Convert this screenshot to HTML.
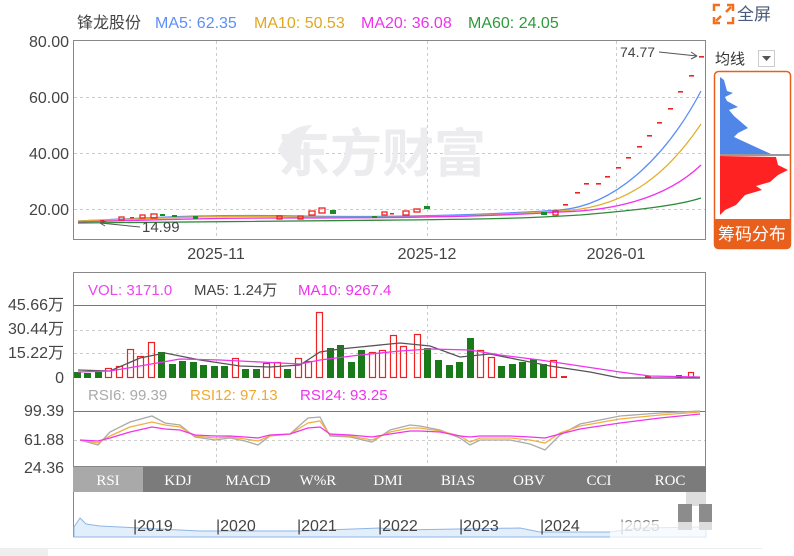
<!DOCTYPE html>
<html><head><meta charset="utf-8"><style>
body{margin:0;width:794px;height:556px;background:#fff;overflow:hidden;font-family:"Liberation Sans","Noto Sans CJK SC",sans-serif;}
svg{position:absolute;left:0;top:0}
</style></head><body>
<svg width="794" height="556" viewBox="0 0 794 556" font-family="Liberation Sans, Noto Sans CJK SC, sans-serif">
<text x="77" y="28" font-size="16" fill="#444">锋龙股份</text>
<text x="155" y="28" font-size="16" fill="#5b8ff9">MA5: 62.35</text>
<text x="254" y="28" font-size="16" fill="#e0a820">MA10: 50.53</text>
<text x="361" y="28" font-size="16" fill="#ee33ee">MA20: 36.08</text>
<text x="468" y="28" font-size="16" fill="#2e9a3a">MA60: 24.05</text>
<g stroke="#f07020" stroke-width="2.5" fill="none">
<path d="M714 11V5h6M727 5h6v6M714 17v6h6M733 17v6h-6"/>
<path d="M716 21l5-5M731 7l-5 5"/>
</g>
<text x="737" y="20" font-size="17" fill="#4a5a7a">全屏</text>
<g font-size="16" fill="#444" text-anchor="end">
<text x="69" y="47">80.00</text><text x="69" y="103">60.00</text><text x="69" y="159">40.00</text><text x="69" y="215">20.00</text>
</g>
<rect x="73.5" y="40.5" width="632" height="199" fill="#fff" stroke="#888"/>
<g stroke="#ccc" stroke-dasharray="3,3">
<path d="M74 97.5H705M74 153.5H705M74 209.5H705"/>
<path d="M216.5 41V239M427.5 41V239M616.5 41V239"/>
</g>
<text x="278" y="172" font-size="52" fill="#ececee" font-weight="bold">东方财富</text>
<path d="M278 150q10-25 35-25q-15 10-12 45q-15-5-23-20z" fill="#ececee"/>
<g fill="none" stroke-width="1.3">
<path d="M78 221C150 218 200 214 300 216S500 214 560 210C620 205 670 150 701 91" stroke="#5b8ff9"/>
<path d="M78 221C150 219 200 215 300 217S500 215 560 211C630 208 670 170 701 124" stroke="#e0b030"/>
<path d="M78 222C150 220 200 218 300 218S500 216 560 212C640 210 680 185 701 165" stroke="#ee33ee"/>
<path d="M78 223C200 222 300 221 400 220S530 218 580 215C640 210 680 205 701 198" stroke="#2e8a3a"/>
</g>
<g fill="none" stroke="#e22" stroke-width="1.3">
<rect x="119" y="217" width="5" height="3"/><rect x="140" y="215" width="5" height="3"/><rect x="151" y="214" width="6" height="4"/>
<rect x="277" y="216" width="5" height="3"/><rect x="298" y="216" width="5" height="3"/>
<rect x="309" y="211" width="6" height="4"/><rect x="319" y="208" width="6" height="5"/>
<rect x="382" y="212" width="5" height="3"/><rect x="403" y="211" width="6" height="4"/><rect x="414" y="209" width="6" height="3"/>
<rect x="553" y="211" width="5" height="4"/>
</g>
<g fill="#1a8a2a">
<rect x="160" y="214" width="5" height="2"/><rect x="172" y="215" width="5" height="2"/><rect x="193" y="216" width="5" height="3"/>
<rect x="330" y="210" width="6" height="4"/><rect x="372" y="216" width="5" height="2"/><rect x="424" y="206" width="6" height="3"/>
<rect x="541" y="212" width="6" height="3"/>
</g>
<g fill="#e22">
<rect x="563" y="204" width="5" height="1.6"/><rect x="575" y="192" width="5" height="1.6"/><rect x="584" y="183" width="5" height="1.6"/>
<rect x="596" y="183" width="5" height="1.6"/><rect x="605" y="176" width="5" height="1.6"/><rect x="616" y="167" width="5" height="1.6"/>
<rect x="626" y="157" width="5" height="1.6"/><rect x="637" y="146" width="5" height="1.6"/><rect x="647" y="135" width="5" height="1.6"/>
<rect x="657" y="122" width="5" height="1.6"/><rect x="668" y="108" width="5" height="1.6"/><rect x="678" y="91" width="5" height="1.6"/>
<rect x="689" y="75" width="5" height="1.6"/><rect x="699" y="56" width="5" height="1.6"/>
<rect x="100" y="220" width="4" height="1.5"/><rect x="130" y="217" width="4" height="1.5"/><rect x="390" y="213" width="4" height="1.5"/>
</g>
<text x="620" y="57" font-size="14" fill="#444">74.77</text>
<path d="M659 52L697 56" stroke="#555"/><path d="M697 56l-6-4M697 56l-6 3" stroke="#555"/>
<path d="M100 223L140 227" stroke="#555"/><path d="M100 223l6-2M100 223l5 3" stroke="#555"/>
<text x="142" y="232" font-size="15" fill="#444">14.99</text>
<g font-size="16" fill="#444" text-anchor="middle">
<text x="216" y="259">2025-11</text><text x="427" y="259">2025-12</text><text x="616" y="259">2026-01</text>
</g>
<text x="715" y="64" font-size="15" fill="#333">均线</text>
<rect x="758.5" y="50.5" width="16" height="16" fill="#fff" stroke="#ccc"/>
<path d="M762 56h9l-4.5 5z" fill="#555"/>
<rect x="714.5" y="71.5" width="76" height="177" rx="4" fill="#fff" stroke="#e8601c" stroke-width="1.5"/>
<path d="M720 77L724 80L727 91L733 93L725 97L727 101L738 107L729 110L734 116L748 128L738 133L734 137L771 154L720 154Z" fill="#4f86e8"/>
<rect x="720" y="154" width="70" height="2" fill="#999"/>
<path d="M720 156L776 157L778 165L788 170L778 175L770 182L756 186L762 190L745 195L736 205L725 210L720 215Z" fill="#f22"/>
<path d="M714 219h77v25a4 4 0 0 1-4 4h-69a4 4 0 0 1-4-4z" fill="#e8601c"/>
<text x="752" y="240" font-size="17" fill="#fff" text-anchor="middle">筹码分布</text>
<rect x="73.5" y="272.5" width="632" height="194" fill="#fff" stroke="#888"/>
<path d="M74 305.5H705M74 411.5H705" stroke="#777"/>
<text x="88" y="295" font-size="15" fill="#ee44ee">VOL: 3171.0</text>
<text x="194" y="295" font-size="15" fill="#444">MA5: 1.24万</text>
<text x="298" y="295" font-size="15" fill="#ee33ee">MA10: 9267.4</text>
<g font-size="16" fill="#444" text-anchor="end">
<text x="64" y="310">45.66万</text><text x="64" y="334">30.44万</text><text x="64" y="358">15.22万</text><text x="64" y="383">0</text>
<text x="64" y="416">99.39</text><text x="64" y="445">61.88</text><text x="64" y="473">24.36</text>
</g>
<g stroke="#ccc" stroke-dasharray="3,3">
<path d="M74 330.5H705M74 353.5H705M74 440.5H705"/>
<path d="M216.5 306V378M427.5 306V378M616.5 306V378M216.5 412V466M427.5 412V466M616.5 412V466"/>
</g>
<g fill="#1a7a1a">
<rect x="74" y="372" width="7" height="6"/><rect x="84" y="373" width="7" height="5"/><rect x="95" y="372" width="7" height="6"/>
<rect x="158" y="352" width="7" height="26"/><rect x="169" y="364" width="7" height="14"/><rect x="179" y="361" width="7" height="17"/>
<rect x="190" y="362" width="7" height="16"/><rect x="200" y="365" width="7" height="13"/><rect x="211" y="366" width="7" height="12"/>
<rect x="221" y="366" width="7" height="12"/><rect x="242" y="369" width="7" height="9"/><rect x="253" y="369" width="7" height="9"/>
<rect x="284" y="369" width="7" height="9"/><rect x="327" y="348" width="7" height="30"/><rect x="337" y="345" width="7" height="33"/>
<rect x="348" y="362" width="7" height="16"/><rect x="358" y="350" width="7" height="28"/>
<rect x="424" y="348" width="7" height="30"/><rect x="435" y="360" width="7" height="18"/><rect x="446" y="365" width="7" height="13"/>
<rect x="456" y="362" width="7" height="16"/><rect x="467" y="338" width="7" height="40"/><rect x="498" y="366" width="7" height="12"/>
<rect x="509" y="364" width="7" height="14"/><rect x="519" y="362" width="7" height="16"/><rect x="530" y="359" width="7" height="19"/>
<rect x="540" y="364" width="7" height="14"/>
</g>
<g fill="none" stroke="#e22" stroke-width="1.2">
<rect x="105.5" y="368.5" width="6" height="9"/><rect x="116.5" y="366.5" width="6" height="11"/><rect x="127.5" y="349.5" width="6" height="28"/>
<rect x="137.5" y="356.5" width="6" height="21"/><rect x="148.5" y="342.5" width="6" height="35"/><rect x="232.5" y="358.5" width="6" height="19"/>
<rect x="263.5" y="363.5" width="6" height="14"/><rect x="274.5" y="362.5" width="6" height="15"/><rect x="295.5" y="358.5" width="6" height="19"/>
<rect x="305.5" y="361.5" width="6" height="16"/><rect x="316.5" y="312.5" width="6" height="65"/><rect x="369.5" y="352.5" width="6" height="25"/>
<rect x="379.5" y="350.5" width="6" height="27"/><rect x="390.5" y="335.5" width="6" height="42"/><rect x="400.5" y="346.5" width="6" height="31"/>
<rect x="414.5" y="334.5" width="6" height="43"/><rect x="477.5" y="350.5" width="6" height="27"/><rect x="488.5" y="357.5" width="6" height="20"/>
<rect x="550.5" y="360.5" width="6" height="17"/><rect x="688.5" y="372.5" width="5" height="5"/>
</g>
<g fill="#e22"><rect x="561" y="376" width="6" height="2"/><rect x="645" y="376" width="6" height="2"/><rect x="676" y="375" width="6" height="3"/></g>
<g fill="none" stroke-width="1.3">
<polyline stroke="#555" points="78,370 110,371 140,358 165,353 200,360 240,366 270,367 300,365 320,352 340,349 360,347 400,343 430,346 460,357 490,354 520,360 550,366 590,372 620,378 700,378"/>
<polyline stroke="#ee33ee" points="78,372 110,371 140,366 180,359 220,360 260,362 300,364 320,360 360,355 400,351 430,349 470,350 500,355 540,360 580,366 620,372 650,376 700,377"/>
</g>
<text x="88" y="400" font-size="15" fill="#aaa">RSI6: 99.39</text>
<text x="190" y="400" font-size="15" fill="#f0a830">RSI12: 97.13</text>
<text x="300" y="400" font-size="15" fill="#ee33ee">RSI24: 93.25</text>
<g fill="none" stroke-width="1.3">
<polyline stroke="#aaa" points="80,440 98,445 110,432 130,422 152,416 165,423 180,425 195,437 215,440 230,438 245,441 258,445 270,436 290,434 308,418 320,417 330,436 350,437 372,442 390,430 410,425 420,426 440,430 460,438 470,445 480,440 510,440 530,444 545,450 560,435 580,424 620,416 660,413 700,411"/>
<polyline stroke="#f0b040" points="80,440 98,443 110,436 130,427 152,422 165,425 180,427 195,436 215,438 230,437 245,439 258,441 270,436 290,434 308,423 320,421 330,435 350,436 372,440 390,432 410,428 420,428 440,431 460,436 470,442 480,438 510,438 530,440 545,443 560,433 580,426 620,419 660,415 700,412"/>
<polyline stroke="#ee33ee" points="80,440 98,441 110,438 130,432 152,427 165,429 180,430 195,435 215,436 230,436 245,437 258,438 270,435 290,434 308,428 320,427 330,434 350,435 372,437 390,434 410,431 420,431 440,432 460,436 470,437 480,436 510,436 530,437 545,438 560,434 580,429 620,423 660,418 700,414"/>
</g>
<rect x="73" y="467" width="633" height="25" fill="#7b7b7b"/>
<rect x="73" y="467" width="70" height="25" fill="#a9a9a9"/>
<g font-family="Liberation Serif, serif" font-size="15" fill="#fff" text-anchor="middle">
<text x="108" y="485">RSI</text><text x="178" y="485">KDJ</text><text x="248" y="485">MACD</text><text x="318" y="485">W%R</text>
<text x="388" y="485">DMI</text><text x="458" y="485">BIAS</text><text x="529" y="485">OBV</text><text x="599" y="485">CCI</text><text x="670" y="485">ROC</text>
</g>
<path d="M73.5 492V537" stroke="#888"/>
<path d="M74 537V527L80 518L86 524L100 526L120 527L200 531L300 531L380 528L400 530L520 528L540 532L610 532L640 528L706 527V537Z" fill="#e3eefb" stroke="#8fb4e8"/>
<g font-size="16" fill="#444">
<text x="133" y="531">|2019</text><text x="216" y="531">|2020</text><text x="297" y="531">|2021</text><text x="378" y="531">|2022</text>
<text x="459" y="531">|2023</text><text x="540" y="531">|2024</text><text x="620" y="531" fill="#888">|2025</text>
</g>
<rect x="686" y="492" width="20" height="14" fill="#ddd"/>
<rect x="678" y="504" width="14" height="26" fill="#8c8c8c"/><rect x="699" y="504" width="13" height="26" fill="#8c8c8c"/>
<rect x="610" y="522" width="160" height="16" fill="#fff" opacity="0.7"/>
<rect x="0" y="548" width="48" height="8" fill="#eee"/>
<path d="M48 548.5H762" stroke="#eee"/>
</svg>
</body></html>
